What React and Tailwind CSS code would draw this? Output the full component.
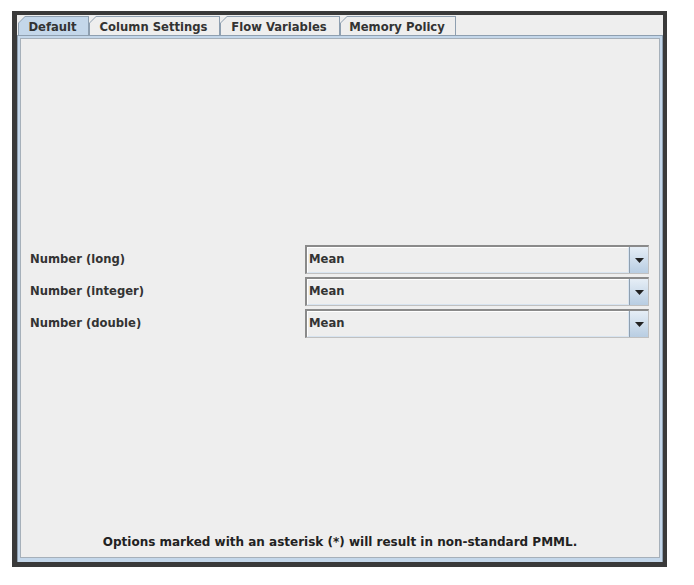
export default function App() {
  const tabs = [
    { name: "Default", w: "w-[71px]", active: true },
    { name: "Column Settings", w: "w-[131px]" },
    { name: "Flow Variables", w: "w-[120px]" },
    { name: "Memory Policy", w: "w-[116px]" },
  ];
  const rows = ["Number (long)", "Number (integer)", "Number (double)"];

  return (
    <div className="w-[694px] h-[585px] bg-white pl-[12px] pt-[11px] font-['DejaVu_Sans',sans-serif] font-bold text-[11.6px] text-[#333333]">
      <div className="w-[655px] h-[556px] border-[#3a3a3a] border-t-[4px] border-l-[5px] border-r-[4px] border-b-[5px] bg-[#eeeeee] flex flex-col">
        {/* tab strip */}
        <div className="flex h-[20px] pl-[1px] pt-[1px] items-end">
          {tabs.map((t) => (
            <div
              key={t.name}
              className={`${t.w} h-[19px] bg-[#8e9fb0] pt-[1px] pl-[1px] pr-[1px] [clip-path:polygon(7px_0,100%_0,100%_100%,0_100%,0_7px)]`}
            >
              <div
                className={`h-full flex items-center justify-center pt-[3px] [clip-path:polygon(6px_0,100%_0,100%_100%,0_100%,0_6px)] ${
                  t.active ? "bg-[#c4d7ea]" : "bg-[#eeeeee]"
                }`}
              >
                <span className="pr-[2px]">{t.name}</span>
              </div>
            </div>
          ))}
        </div>
        {/* content panel */}
        <div className="flex-1 border-t border-l border-r border-[#8e9fb0] bg-[#c4d7ea] pt-[2px] px-[2px] pb-[4px] flex">
          <div className="flex-1 border border-[#a6b0ba] bg-[#eeeeee] flex flex-col">
            <div className="pt-[206px] pl-[9px] pr-[10px] flex flex-col gap-[3px]">
              {rows.map((r) => (
                <div key={r} className="flex items-center h-[29px]">
                  <div className="w-[275px]">{r}</div>
                  <div className="flex-1 h-[29px] border-t-2 border-l-2 border-[#8a8a8a] border-b border-r border-b-[#c0c0c0] border-r-[#c0c0c0] flex">
                    <div className="flex-1 border border-[#d8e4f0] border-t-white border-l-white flex items-center pl-[1px]">
                      Mean
                    </div>
                    <div className="w-[19px] border-l border-[#8e9fb0] bg-gradient-to-b from-[#e6eef6] to-[#b8cde2] flex items-center justify-center">
                      <svg width="9" height="5" viewBox="0 0 9 5">
                        <path d="M0 0H9L4.5 5Z" fill="#222" />
                      </svg>
                    </div>
                  </div>
                </div>
              ))}
            </div>
            <div className="flex-1" />
            <div className="text-center text-[12px] text-[#222222] pb-[6px]">
              Options marked with an asterisk (*) will result in non-standard PMML.
            </div>
          </div>
        </div>
      </div>
    </div>
  );
}
